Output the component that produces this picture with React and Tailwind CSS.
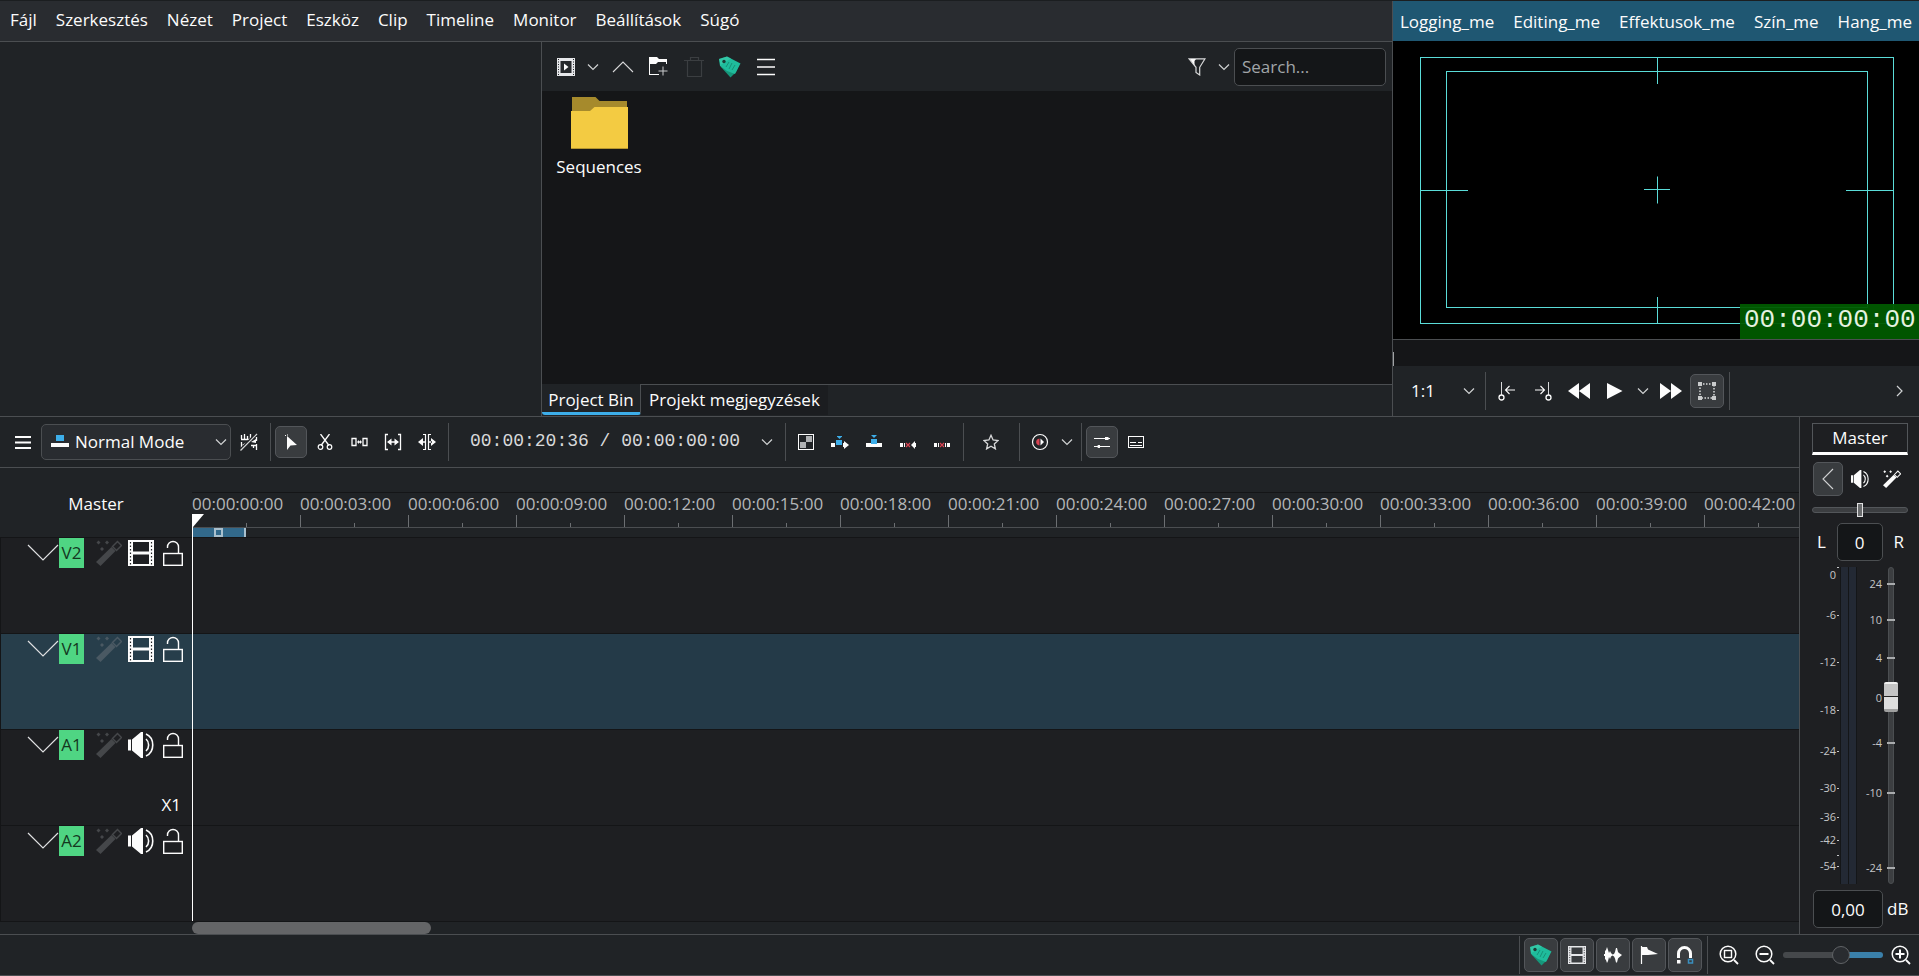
import { useState } from 'react';

const MENUS = ['Fájl', 'Szerkesztés', 'Nézet', 'Project', 'Eszköz', 'Clip', 'Timeline', 'Monitor', 'Beállítások', 'Súgó'];
const WORKSPACES = ['Logging_me', 'Editing_me', 'Effektusok_me', 'Szín_me', 'Hang_me'];

const TRACKS = [
  { id: 'V2', type: 'video' },
  { id: 'V1', type: 'video', active: true },
  { id: 'A1', type: 'audio', target: 'X1' },
  { id: 'A2', type: 'audio' },
];

const RULER = Array.from({ length: 15 }, (_, i) => `00:00:${String(i * 3).padStart(2, '0')}:00`);

// y offsets inside the 317px meter
const METER_MARKS = [
  { label: '0', y: 8, tick: 1 },
  { label: '-6', y: 48 },
  { label: '-12', y: 95 },
  { label: '-18', y: 143 },
  { label: '-24', y: 184 },
  { label: '-30', y: 221 },
  { label: '-36', y: 250 },
  { label: '-42', y: 273 },
  { label: '', y: 288 },
  { label: '-54', y: 299 },
];

const FADER_MARKS = [
  { label: '24', y: 17 },
  { label: '10', y: 53 },
  { label: '4', y: 91 },
  { label: '0', y: 131 },
  { label: '-4', y: 176 },
  { label: '-10', y: 226 },
  { label: '-24', y: 301 },
];

/* ---------- icons ---------- */

function Svg({ size = 16, w, h, children }) {
  const width = w || size;
  const height = h || size;
  return (
    <svg width={width} height={height} viewBox={`0 0 ${width} ${height}`} fill="none" aria-hidden="true" className="shrink-0">
      {children}
    </svg>
  );
}

const Chevron = () => (
  <Svg w={12} h={8}>
    <path d="M1 1.5 6 6.5 11 1.5" stroke="#d0d2d3" strokeWidth="1.2" />
  </Svg>
);

const Hamburger = ({ thin }) => (
  <Svg w={18} h={18}>
    <path d={thin ? 'M0 1.5h18M0 9h18M0 16.5h18' : 'M1 4h16M1 9.5h16M1 15h16'} stroke="#fcfcfc" strokeWidth={thin ? 1.4 : 2} />
  </Svg>
);

const AddClip = () => (
  <Svg size={18}>
    <rect width="18" height="18" fill="#e6e7ea" />
    <rect x="3.5" y="3" width="11" height="12" fill="#26292c" />
    <path d="M1.5 1v16M16.5 1v16" stroke="#202326" strokeWidth="1" strokeDasharray="1 1.5" />
    <path d="M7 5.5v7l4.5-3.5z" fill="#fcfcfc" />
  </Svg>
);

const Up = () => (
  <Svg w={22} h={14}>
    <path d="M1 12 11 2 21 12" stroke="#d8d9da" strokeWidth="1.1" />
  </Svg>
);

const NewFolder = () => (
  <Svg w={19} h={19}>
    <path d="M0 0h8l2 2h8v5h-1V5H9L7 7H1v10h9v1H0z" fill="#fcfcfc" />
    <path d="M14 9.5v9M9.5 14h9" stroke="#c9cbcc" strokeWidth="1" />
  </Svg>
);

const Trash = () => (
  <Svg w={20} h={22}>
    <path d="M0 4.5h20M6.5 4V1.5h8V4M3.5 5v15.500h14V5" stroke="#3b3e41" strokeWidth="1.2" />
  </Svg>
);

const Tag = () => (
  <Svg size={22}>
    <path d="M2 11 11.500 21.500 17 16 20 9z" fill="#16967a" />
    <path d="M0 3 8 .5l13.500 7L16 18 8 15 1 10z" fill="#1fbc9c" />
    <path d="M0 3 8 .5l4 2L1.500 9z" fill="#3fcfae" opacity=".6" />
    <circle cx="5" cy="5.500" r="1.700" fill="#1b3b35" />
    <path d="m10 6-3 5M13 7l-3 6M16 9l-3 5" stroke="#14866d" strokeWidth=".8" />
  </Svg>
);

const Filter = () => (
  <Svg w={18} h={18}>
    <path d="M1 .8h16l-5.300 8.500V17L8 14.500V9.300z" stroke="#d8d9da" strokeWidth="1.2" />
    <path d="M2 1h6L6.500 3v4.500z" fill="#fcfcfc" />
  </Svg>
);

const Folder = () => (
  <Svg w={57} h={52}>
    <path d="M1 0h23.500l4 4H56v12H1z" fill="#a68a2c" />
    <path d="M0 14h19l4.500-4H57v42H0z" fill="#f3cb42" />
    <path d="M0 51.500h57" stroke="#b5962f" />
  </Svg>
);

const ZoneIn = () => (
  <Svg w={18} h={19}>
    <path d="M3.500 0v13" stroke="#d8d9da" />
    <circle cx="3.500" cy="15.500" r="2.500" stroke="#fcfcfc" strokeWidth="1.300" />
    <path d="M17 8H7.500M11.500 4l-4 4 4 4" stroke="#fcfcfc" strokeWidth="1.100" />
  </Svg>
);

const ZoneOut = () => (
  <Svg w={18} h={19}>
    <path d="M14.500 0v13" stroke="#d8d9da" />
    <circle cx="14.500" cy="15.500" r="2.500" stroke="#fcfcfc" strokeWidth="1.300" />
    <path d="M1 8h9.500M6.500 4l4 4-4 4" stroke="#fcfcfc" strokeWidth="1.100" />
  </Svg>
);

const Rewind = () => (
  <Svg w={22} h={16}>
    <path d="M11 0v16L0 8zM22 0v16L11 8z" fill="#fcfcfc" />
  </Svg>
);

const Forward = () => (
  <Svg w={22} h={16}>
    <path d="M0 0v16l11-8zM11 0v16l11-8z" fill="#fcfcfc" />
  </Svg>
);

const Play = () => (
  <Svg w={16} h={16}>
    <path d="M0 0v16l15.500-8z" fill="#fcfcfc" />
  </Svg>
);

const EditBox = () => (
  <Svg size={20}>
    <rect x="3" y="3" width="14" height="14" stroke="#d8d9da" strokeWidth="1.500" strokeDasharray="1.500 1.500" />
    <path d="M1 1h4v4H1zM15 1h4v4h-4zM1 15h4v4H1zM15 15h4v4h-4z" fill="#c9cbcc" />
  </Svg>
);

const ModeIcon = () => (
  <Svg w={18} h={14}>
    <path d="M5 0h8v6H5z" fill="#3daee9" />
    <path d="M0 8h18v4H0z" fill="#fcfcfc" />
  </Svg>
);

const SnapOff = () => (
  <Svg size={18}>
    <path d="M1.500 2v4M4.500 1v5M7.500 3v3M10.500 1v5M1 6.500h11M1.500 9v8M16.500 4v4M16.500 11v6M13.500 12v3M11 12.500h6" stroke="#fcfcfc" strokeWidth="1.300" />
    <path d="M6 9.500 2 12l2 1.500zM11 9l5-3v4z" fill="#fcfcfc" />
    <path d="M0 17 16.500.500" stroke="#202326" strokeWidth="2.500" />
    <path d="M.500 17.500 17 1" stroke="#d8d9da" strokeWidth="1.200" />
  </Svg>
);

const Arrow = () => (
  <Svg size={16}>
    <path d="M4 2v14l3.500-4.500L14 11z" fill="#fcfcfc" />
    <path d="M2.500 1v1M4 1h1" stroke="#fcfcfc" />
  </Svg>
);

const Scissors = () => (
  <Svg size={16}>
    <path d="M3.500 0 12 11.500M12.500 0 4 11.500" stroke="#fcfcfc" strokeWidth="1.300" />
    <circle cx="3.500" cy="13" r="2.300" stroke="#fcfcfc" strokeWidth="1.200" />
    <circle cx="12.500" cy="13" r="2.300" stroke="#fcfcfc" strokeWidth="1.200" />
  </Svg>
);

const Spacer = () => (
  <Svg w={17} h={16}>
    <path d="M1 4.500h4v7H1zM12 4.500h4v7h-4zM7 8h3" stroke="#fcfcfc" strokeWidth="1.300" />
    <path d="M6 8 8 6v4zM11 8 9 6v4z" fill="#fcfcfc" />
  </Svg>
);

const Slip = () => (
  <Svg size={18}>
    <path d="M4 1.500H1.500v15H4M14 1.500h2.500v15H14" stroke="#fcfcfc" strokeWidth="1.300" />
    <path d="M5 9h8" stroke="#fcfcfc" strokeWidth="1.500" />
    <path d="M3 9 7.500 5.500v7zM15 9l-4.500-3.500v7z" fill="#fcfcfc" />
  </Svg>
);

const Ripple = () => (
  <Svg size={18}>
    <path d="M5 1.500h2.500v15H5M13 1.500h-2.500v15H13" stroke="#fcfcfc" strokeWidth="1.200" />
    <path d="M0 9 5 5v8zM18 9l-5-4v8zM4 8.300h3v1.400H4zM11 8.300h3v1.400h-3z" fill="#fcfcfc" />
  </Svg>
);

const Composite = () => (
  <Svg size={16}>
    <rect x=".5" y=".5" width="15" height="15" stroke="#fcfcfc" />
    <path d="M8 2h6v6H8zM2 8h6v6H2z" fill="#b0b2b4" />
  </Svg>
);

const InsertClip = () => (
  <Svg w={18} h={14}>
    <path d="M6 1h5v1H6zM6.500 2h4l-2 2z" fill="#3daee9" />
    <path d="M5 5h6v5H5z" fill="#3daee9" />
    <path d="M0 8h4v4H0zM13 6l5 4-5 4z" fill="#fcfcfc" />
    <path d="M12 8h2v4h-2z" fill="#fcfcfc" />
  </Svg>
);

const OverwriteClip = () => (
  <Svg w={16} h={14}>
    <path d="M5 0h6L8 3z" fill="#3daee9" />
    <path d="M0 8h16v4H0z" fill="#fcfcfc" />
    <path d="M5 4h6v5H5z" fill="#3daee9" />
  </Svg>
);

const ExtractClip = () => (
  <Svg w={16} h={14}>
    <path d="M0 8h3v4H0zM4 8h1v4H4zM11 10l4-4v8z" fill="#fcfcfc" />
    <path d="M14 8h2v4h-2z" fill="#fcfcfc" />
    <path d="m6 8 4 4M10 8l-4 4" stroke="#da4453" strokeWidth="1.200" />
  </Svg>
);

const LiftClip = () => (
  <Svg w={16} h={14}>
    <path d="M0 8h3v4H0zM4 8h1v4H4zM11 8h1v4h-1zM13 8h3v4h-3z" fill="#fcfcfc" />
    <path d="m6 8 4 4M10 8l-4 4" stroke="#da4453" strokeWidth="1.200" />
  </Svg>
);

const Star = () => (
  <Svg size={16}>
    <path d="m8 1.300 2.100 4.700 5 .5-3.800 3.400 1.100 5L8 12.300l-4.400 2.600 1.100-5L.9 6.500l5-.5z" stroke="#d8d9da" strokeWidth="1.300" />
  </Svg>
);

const Preview = () => (
  <Svg size={18}>
    <circle cx="9" cy="9" r="7.500" stroke="#fcfcfc" strokeWidth="1.200" />
    <path d="M8.500 5.500v7C4 12 4 6 8.500 5.500z" fill="#da4453" />
    <path d="M9.500 5.500v7L13 9z" fill="#fcfcfc" />
  </Svg>
);

const MixerIcon = () => (
  <Svg size={16}>
    <path d="M0 4.500h16M0 12.500h16" stroke="#fcfcfc" />
    <path d="M11 3h3l1.500 1.500L14 6h-3zM6 11H4l-1 1.500L4 14h2z" fill="#fcfcfc" />
  </Svg>
);

const Subtitle = () => (
  <Svg size={16}>
    <rect x=".5" y="2.500" width="15" height="11" stroke="#fcfcfc" />
    <path d="M2 8.500h6M10 8.500h4M2 11.500h12" stroke="#fcfcfc" />
  </Svg>
);

const Back = () => (
  <Svg w={12} h={22}>
    <path d="M11 1 1 11l10 10" stroke="#d0d2d3" strokeWidth="1.100" />
  </Svg>
);

// 26px drawings shared by the track headers and the toolbars
function Scaled({ size = 26, children }) {
  return (
    <svg width={size} height={size} viewBox="0 0 26 26" fill="none" aria-hidden="true" className="shrink-0">
      {children}
    </svg>
  );
}

const Wand = ({ size, color = '#fcfcfc' }) => (
  <Scaled size={size}>
    <path d="M0 22 15.500 7l4 4L4.500 26z" fill={color} />
    <path d="m16.500 6.500 5-5 4 4-5 5z" stroke={color} strokeWidth="1.500" />
    <path d="M2.500.5 4.500 2.500l-2 2-2-2zM11 .5l2 2-2 2-2-2zM6 7l2 2-2 2-2-2z" fill={color} />
  </Scaled>
);

const Film = ({ size, color = '#fcfcfc' }) => (
  <Scaled size={size}>
    <path fillRule="evenodd" d="M0 0h26v26H0zM5 2v9.500h16V2zM5 14.500V24h16v-9.500z" fill={color} />
    <path d="M2.500 2v23M23.500 2v23" stroke="#1e1f22" strokeWidth="1.200" strokeDasharray="1.500 2" />
  </Scaled>
);

const Speaker = ({ size }) => (
  <Scaled size={size}>
    <path d="M0 7.500h3v11H0zM4 7.500l9-7.500h2v26h-2l-9-7.500z" fill="#fcfcfc" />
    <path d="M18 7c3.500 3 3.500 9 0 12M18 2c9 4 9 18 0 22" stroke="#fcfcfc" strokeWidth="1.600" />
  </Scaled>
);

const Lock = () => (
  <Svg w={20} h={26}>
    <path d="M4.500 8V7a5.500 5.500 0 0 1 11 0v6" stroke="#fcfcfc" strokeWidth="1.400" />
    <rect x=".7" y="13.500" width="18.600" height="11.800" stroke="#fcfcfc" strokeWidth="1.400" />
  </Svg>
);

const TrackChevron = () => (
  <Svg w={32} h={18}>
    <path d="m1 1 15 15L31 1" stroke="#e0e1e2" strokeWidth="1.200" />
  </Svg>
);

const Waveform = () => (
  <Svg size={18}>
    <path d="M0 8h1V5l1-1 1-3 1 3 1 3 1-2 1 2 1.500 1.500L10 8l1-2 1-4h1l1 4 1 1 3 2-3 2.500-1 1-1 4h-1l-1-4-1-2-1.500-1L7 10.500l-1 2.500-1-2-1 4-1 2-1-3-1-1v-3H0z" fill="#fcfcfc" />
  </Svg>
);

const Flag = () => (
  <Svg size={18}>
    <path d="M1.500 0v18" stroke="#fcfcfc" strokeWidth="1.200" />
    <path d="M2 1h5l1 2.500 10 4.500-10 1H2z" fill="#fcfcfc" />
  </Svg>
);

const Magnet = () => (
  <Svg size={18}>
    <path d="M2.500 12V7.500a6 6 0 0 1 12 0V12" stroke="#fcfcfc" strokeWidth="3" />
    <path d="M1 14h3.500v3.500H1z" fill="#fcfcfc" />
    <path d="M12.500 13.500h4v3.500h-4z" stroke="#3a8fbf" strokeWidth="1.500" />
  </Svg>
);

const Zoom = ({ kind }) => (
  <Svg size={20}>
    <circle cx="9" cy="9" r="7.800" stroke="#fcfcfc" strokeWidth="1.500" />
    <path d="m15 15 4 4" stroke="#fcfcfc" strokeWidth="1.800" />
    {kind === 'fit' && <rect x="5.500" y="5.500" width="7" height="7" stroke="#fcfcfc" strokeWidth="1.400" />}
    {kind !== 'fit' && <path d="M4.500 9h9" stroke="#fcfcfc" strokeWidth="2" />}
    {kind === 'in' && <path d="M9 4.500v9" stroke="#fcfcfc" strokeWidth="2" />}
  </Svg>
);

/* ---------- small controls ---------- */

function ToolButton({ label, pressed, className = 'w-8 h-8', children }) {
  return (
    <button
      type="button"
      aria-label={label}
      aria-pressed={pressed}
      className={`m-px shrink-0 flex items-center justify-center rounded-[5px] border ${
        pressed ? 'bg-[#393c3f] border-[#53565a]' : 'border-transparent hover:border-[#3daee9]'
      } ${className}`}
    >
      {children}
    </button>
  );
}

function Separator() {
  return (
    <div className="w-2 shrink-0 flex justify-center">
      <div className="w-px h-[38px] bg-[#4b4e51]" />
    </div>
  );
}

/* ---------- panels ---------- */

function ProjectBin() {
  return (
    <section className="flex-1 min-w-0 flex flex-col border-l border-[#4b4e51]">
      <div className="h-[49px] flex items-center pl-[7px] pr-1.5">
        <ToolButton label="Add clip"><AddClip /></ToolButton>
        <ToolButton label="Add clip options" className="w-[18px] h-8 mr-1"><Chevron /></ToolButton>
        <ToolButton label="Up"><Up /></ToolButton>
        <ToolButton label="New folder" className="w-[34px] h-8"><NewFolder /></ToolButton>
        <ToolButton label="Delete" className="w-[34px] h-8"><Trash /></ToolButton>
        <ToolButton label="Tags" className="w-[34px] h-8"><Tag /></ToolButton>
        <ToolButton label="Options" className="w-[34px] h-8"><Hamburger thin /></ToolButton>
        <div className="flex-1" />
        <ToolButton label="Filter"><Filter /></ToolButton>
        <ToolButton label="Filter options" className="w-[18px] h-8"><Chevron /></ToolButton>
        <input
          type="text"
          aria-label="Search"
          placeholder="Search..."
          className="w-[152px] h-[38px] rounded-[5px] border border-[#4b4e51] bg-[#141618] px-[7px] text-white placeholder:text-[#a1a5a8]"
        />
      </div>
      <div className="flex-1 bg-[#151618] pl-2 pt-1.5">
        <button type="button" className="w-[98px] flex flex-col items-center gap-1.5">
          <Folder />
          <span>Sequences</span>
        </button>
      </div>
      <div role="tablist" className="h-8 flex border-t border-[#4b4e51]">
        <button type="button" role="tab" aria-selected="true" className="h-[31px] -mt-px pt-1 w-[99px] bg-[#202326] border-r border-b-[3px] border-r-[#4b4e51] border-b-[#3daee9] rounded-b-[3px]">
          Project Bin
        </button>
        <button type="button" role="tab" aria-selected="false" className="h-[30px] px-2 bg-[#1b1d20]">Projekt megjegyzések</button>
      </div>
    </section>
  );
}

function ProjectMonitor() {
  return (
    <section className="flex-1 flex flex-col">
      <div className="relative bg-black border-b border-[#4b4e51]">
        <svg viewBox="0 0 526 298" className="block w-full h-[298px]" fill="none" stroke="#5adcd8" aria-hidden="true">
          <rect x="27.500" y="16.500" width="473" height="266" />
          <rect x="53.500" y="30.500" width="421" height="236" />
          <path d="M264.500 16v27M264.500 256v27M28 149.500h47M453 149.500h47M251 148.500h26M264.500 135.500v27" />
        </svg>
        <div className="absolute right-0 bottom-0 h-[35px] w-[179px] pl-1 overflow-hidden bg-[#005a00]/95 font-['Liberation_Mono',monospace] text-[26px] leading-8 text-[#e6f2e0]">
          00:00:00:00
        </div>
      </div>
      <div className="h-[26px] bg-[#151618] flex items-end">
        <div className="w-px h-3.5 bg-[#a0a2a4]" />
      </div>
      <div className="h-[50px] flex items-center">
        <div className="relative w-[88px] h-9 flex items-center">
          <select aria-label="Zoom" className="appearance-none w-full h-full pl-[18px] bg-transparent">
            <option>1:1</option>
          </select>
          <span className="absolute right-1.5 pointer-events-none"><Chevron /></span>
        </div>
        <Separator />
        <ToolButton label="Set zone in" className="w-[34px] h-[34px]"><ZoneIn /></ToolButton>
        <ToolButton label="Set zone out" className="w-[34px] h-[34px]"><ZoneOut /></ToolButton>
        <ToolButton label="Rewind" className="w-[34px] h-[34px]"><Rewind /></ToolButton>
        <ToolButton label="Play" className="w-[34px] h-[34px]"><Play /></ToolButton>
        <ToolButton label="Play options" className="w-[18px] h-[34px]"><Chevron /></ToolButton>
        <ToolButton label="Forward" className="w-[34px] h-[34px]"><Forward /></ToolButton>
        <ToolButton label="Edit mode" pressed className="w-[34px] h-[34px]"><EditBox /></ToolButton>
        <Separator />
        <div className="flex-1" />
        <ToolButton label="More" className="w-9 h-[34px]">
          <Svg w={8} h={12}>
            <path d="m1 1 5 5-5 5" stroke="#d0d2d3" strokeWidth="1.200" />
          </Svg>
        </ToolButton>
      </div>
    </section>
  );
}

function TimelineToolbar() {
  return (
    <div className="h-[51px] flex items-center pl-1.5 border-b border-[#4b4e51]">
      <ToolButton label="Timeline menu"><Hamburger /></ToolButton>
      <div className="relative mx-px w-[190px] h-9 flex items-center">
        <select aria-label="Edit mode" className="appearance-none w-full h-full pl-[33px] rounded-[5px] border border-[#4b4e51] bg-[#292c30]">
          <option>Normal Mode</option>
        </select>
        <span className="absolute left-2.5 pointer-events-none"><ModeIcon /></span>
        <span className="absolute right-1 pointer-events-none"><Chevron /></span>
      </div>
      <ToolButton label="Mix clips"><SnapOff /></ToolButton>
      <Separator />
      <ToolButton label="Selection tool" pressed><Arrow /></ToolButton>
      <ToolButton label="Razor tool"><Scissors /></ToolButton>
      <ToolButton label="Spacer tool"><Spacer /></ToolButton>
      <ToolButton label="Slip tool"><Slip /></ToolButton>
      <ToolButton label="Ripple tool"><Ripple /></ToolButton>
      <Separator />
      <div className="w-[301px] pl-[18px] pb-0.5 whitespace-nowrap font-['Liberation_Mono',monospace] text-lg leading-6 text-[#d8d9da]">
        00:00:20:36 / 00:00:00:00
      </div>
      <ToolButton label="Timecode options" className="w-[26px] h-8"><Chevron /></ToolButton>
      <Separator />
      <ToolButton label="Track compositing"><Composite /></ToolButton>
      <ToolButton label="Insert clip"><InsertClip /></ToolButton>
      <ToolButton label="Overwrite clip"><OverwriteClip /></ToolButton>
      <ToolButton label="Extract zone"><ExtractClip /></ToolButton>
      <ToolButton label="Lift zone"><LiftClip /></ToolButton>
      <Separator />
      <ToolButton label="Favorite effects" className="w-[46px] h-8"><Star /></ToolButton>
      <Separator />
      <ToolButton label="Preview render"><Preview /></ToolButton>
      <ToolButton label="Preview options" className="w-[18px] h-8"><Chevron /></ToolButton>
      <Separator />
      <ToolButton label="Audio mixer" pressed><MixerIcon /></ToolButton>
      <ToolButton label="Subtitles"><Subtitle /></ToolButton>
    </div>
  );
}

function Track({ track }) {
  return (
    <div className={`h-24 flex border-t border-[#141517] ${track.active ? 'bg-[#243a48]' : 'bg-[#1e1f22]'}`}>
      <div className={`w-48 shrink-0 border-l border-[#141517] flex flex-col justify-between ${track.active ? 'bg-[#273e4b]' : ''}`}>
        <div className="h-[30px] flex items-center pl-[26px]">
          <button type="button" aria-label={`Collapse ${track.id}`}><TrackChevron /></button>
          <span className="w-[25px] h-[30px] flex items-center justify-center bg-[#4fd583] text-[#14381f]">{track.id}</span>
          <button type="button" aria-label="Effects" className="ml-3"><Wand size={26} color={track.active ? '#4a5963' : '#45474a'} /></button>
          <button type="button" aria-label={track.type === 'video' ? 'Hide' : 'Mute'} className="ml-1.5">
            {track.type === 'video' ? <Film size={26} /> : <Speaker size={26} />}
          </button>
          <button type="button" aria-label="Lock" className="ml-[9px]"><Lock /></button>
        </div>
        {track.target && <span className="self-end pr-[11px] pb-2 leading-6">{track.target}</span>}
      </div>
      <div className="flex-1" />
    </div>
  );
}

function Timeline() {
  return (
    <div className="relative flex-1 flex flex-col pt-6">
      <div className="h-[45px] flex">
        <div className="w-48 shrink-0 text-center leading-6">Master</div>
        <div className="flex-1 min-w-0">
          <div className="h-9 flex overflow-hidden border-t border-[#141517] border-b border-b-[#4b4e51]">
            {RULER.map((time) => (
              <div key={time} className="w-[108px] shrink-0 flex flex-col justify-between text-[#b4b6b8]">
                <span className="leading-[22px]">{time}</span>
                <div className="flex h-3 items-end">
                  <div className="w-[54px] h-3 border-l border-[#6c6f72]" />
                  <div className="w-px h-1 bg-[#6c6f72]" />
                </div>
              </div>
            ))}
          </div>
          <div className="h-[9px] w-[54px] flex justify-center items-center bg-[#32698b] border-r-2 border-[#a9c0ce]">
            <div className="w-[9px] h-[9px] border-2 border-[#a9c0ce]" />
          </div>
        </div>
      </div>
      {TRACKS.map((track) => <Track key={track.id} track={track} />)}
      <div className="h-[13px] pl-48 border-t border-[#141517]">
        <div className="w-[239px] h-3 rounded-full bg-[#646567]" />
      </div>
      {/* playhead */}
      <div className="absolute left-48 top-[46px] bottom-[13px]">
        <div className="w-px h-full bg-white" />
        <svg width="12" height="13" className="absolute left-0 top-0" aria-hidden="true">
          <path d="M0 0h12L1 13H0z" fill="#fff" />
        </svg>
      </div>
    </div>
  );
}

function Mixer() {
  const [balance, setBalance] = useState(50);
  const [volume, setVolume] = useState(60);

  return (
    <aside className="w-[120px] shrink-0 border-l border-[#4b4e51] bg-[#1e1f22] pl-3 pr-[11px] py-1.5 flex flex-col gap-1.5">
      <button type="button" className="h-8 mb-px border border-b-[3px] border-[#53565a] border-b-white">Master</button>
      <div className="h-[34px] flex items-center">
        <ToolButton label="Collapse mixer" pressed className="w-[30px] h-[34px]"><Back /></ToolButton>
        <ToolButton label="Mute master" className="w-[30px] h-[34px]"><Speaker size={18} /></ToolButton>
        <ToolButton label="Master effects" className="w-[30px] h-[34px]"><Wand size={18} /></ToolButton>
      </div>
      <input
        type="range"
        aria-label="Balance"
        value={balance}
        onChange={(e) => setBalance(Number(e.target.value))}
        className="appearance-none h-[15px] w-full bg-transparent
                   [&::-webkit-slider-runnable-track]:h-1.5 [&::-webkit-slider-runnable-track]:rounded-full [&::-webkit-slider-runnable-track]:bg-[#3c3e41]
                   [&::-webkit-slider-runnable-track]:border [&::-webkit-slider-runnable-track]:border-[#53565a]
                   [&::-webkit-slider-thumb]:appearance-none [&::-webkit-slider-thumb]:w-1.5 [&::-webkit-slider-thumb]:h-3.5 [&::-webkit-slider-thumb]:-mt-[5px]
                   [&::-webkit-slider-thumb]:bg-[#6a6c6e] [&::-webkit-slider-thumb]:border [&::-webkit-slider-thumb]:border-[#e0e1e2]"
      />
      <div className="h-[38px] flex items-center justify-between pl-[5px] pr-1">
        <label htmlFor="pan">L</label>
        <input id="pan" type="text" defaultValue="0" className="w-[46px] h-[38px] text-center rounded-[5px] border border-[#4b4e51] bg-[#141618]" />
        <span>R</span>
      </div>
      <div className="h-[317px] flex text-[11px] leading-4 text-[#c4c6c8]">
        <div className="relative w-7">
          {METER_MARKS.map((m) => (
            <div key={m.y} className="absolute right-px -translate-y-1/2 h-4 flex items-center gap-px" style={{ top: m.y }}>
              {m.label}
              <span className={`w-0.5 h-px bg-[#c4c6c8] ${m.tick ? 'self-start' : ''}`} />
            </div>
          ))}
        </div>
        <div className="w-[17px] flex gap-px bg-[#141618] px-px">
          <div className="flex-1 bg-[#232934]" />
          <div className="flex-1 bg-[#232934]" />
        </div>
        <div className="relative w-[25px]">
          {FADER_MARKS.map((m) => (
            <span key={m.y} className="absolute right-0 -translate-y-1/2" style={{ top: m.y }}>{m.label}</span>
          ))}
        </div>
        <div className="relative w-[18px]">
          <div className="h-full w-1.5 mx-auto rounded-full bg-[#3c3e41] border border-[#4b4e51]" />
          {FADER_MARKS.map((m) => (
            <div key={m.y} className="absolute left-[5px] w-2 h-0.5 bg-[#a9abad]" style={{ top: m.y - 1 }} />
          ))}
          <input
            type="range"
            aria-label="Volume"
            value={volume}
            onChange={(e) => setVolume(Number(e.target.value))}
            className="absolute inset-0 h-full w-[18px] appearance-none bg-transparent [writing-mode:vertical-lr] [direction:rtl]
                       [&::-webkit-slider-thumb]:appearance-none [&::-webkit-slider-thumb]:w-3.5 [&::-webkit-slider-thumb]:h-[30px] [&::-webkit-slider-thumb]:rounded-[2px]
                       [&::-webkit-slider-thumb]:bg-[linear-gradient(#f0f0f0_0_2px,#c4c4c4_2px_14px,#222_14px_15px,#dedede_15px_27px,#a0a0a0_27px)]"
          />
        </div>
      </div>
      <div className="h-[38px] flex items-center gap-1">
        <input id="gain" type="text" defaultValue="0,00" className="w-[70px] h-[38px] ml-px text-center rounded-[5px] border border-[#4b4e51] bg-[#141618]" />
        <label htmlFor="gain">dB</label>
      </div>
    </aside>
  );
}

function StatusBar() {
  const [zoom, setZoom] = useState(60);

  return (
    <footer className="h-[42px] flex items-center justify-end border-y border-[#4b4e51]">
      <Separator />
      <ToolButton label="Color tags" pressed className="w-[34px] h-[34px]"><Tag /></ToolButton>
      <ToolButton label="Video thumbnails" pressed className="w-[34px] h-[34px]"><Film size={18} color="#e6e7ea" /></ToolButton>
      <ToolButton label="Audio thumbnails" pressed className="w-[34px] h-[34px]"><Waveform /></ToolButton>
      <ToolButton label="Markers" pressed className="w-[34px] h-[34px]"><Flag /></ToolButton>
      <ToolButton label="Snap" pressed className="w-[34px] h-[34px]"><Magnet /></ToolButton>
      <Separator />
      <ToolButton label="Fit zoom" className="w-[34px] h-[34px]"><Zoom kind="fit" /></ToolButton>
      <ToolButton label="Zoom out" className="w-[34px] h-[34px]"><Zoom kind="out" /></ToolButton>
      <input
        type="range"
        aria-label="Timeline zoom"
        value={zoom}
        onChange={(e) => setZoom(Number(e.target.value))}
        className="appearance-none w-[100px] h-5 bg-transparent
                   [&::-webkit-slider-runnable-track]:h-1.5 [&::-webkit-slider-runnable-track]:rounded-full
                   [&::-webkit-slider-runnable-track]:bg-[linear-gradient(to_right,#45484b_60%,#3a80aa_60%)]
                   [&::-webkit-slider-thumb]:appearance-none [&::-webkit-slider-thumb]:w-[18px] [&::-webkit-slider-thumb]:h-[18px] [&::-webkit-slider-thumb]:-mt-1.5
                   [&::-webkit-slider-thumb]:rounded-full [&::-webkit-slider-thumb]:bg-[#292c30] [&::-webkit-slider-thumb]:border [&::-webkit-slider-thumb]:border-[#606366]"
      />
      <ToolButton label="Zoom in" className="w-[34px] h-[34px]"><Zoom kind="in" /></ToolButton>
    </footer>
  );
}

export default function App() {
  return (
    <div className="min-h-screen flex flex-col overflow-hidden bg-[#202326] text-[#fcfcfc] font-['Open_Sans','Noto_Sans',sans-serif] text-[17px] leading-6">
      <div className="h-[417px] flex border-t border-b border-t-[#1b1e20] border-b-[#4b4e51]">
        <div className="flex-1 min-w-0 flex flex-col">
          <nav className="h-[41px] flex items-center gap-[19px] pl-2.5 pb-0.5 bg-[#292c30] border-b border-[#4b4e51]">
            {MENUS.map((menu) => <button key={menu} type="button">{menu}</button>)}
          </nav>
          <div className="flex-1 flex">
            <div className="w-[541px]" />
            <ProjectBin />
          </div>
        </div>
        <div className="w-[527px] shrink-0 flex flex-col border-l border-[#4b4e51]">
          <nav className="h-10 flex items-center justify-between px-[7px] pt-0.5 bg-[#1f5772]">
            {WORKSPACES.map((name) => <button key={name} type="button">{name}</button>)}
          </nav>
          <ProjectMonitor />
        </div>
      </div>
      <div className="flex-1 flex">
        <main className="flex-1 min-w-0 flex flex-col">
          <TimelineToolbar />
          <Timeline />
        </main>
        <Mixer />
      </div>
      <StatusBar />
    </div>
  );
}
